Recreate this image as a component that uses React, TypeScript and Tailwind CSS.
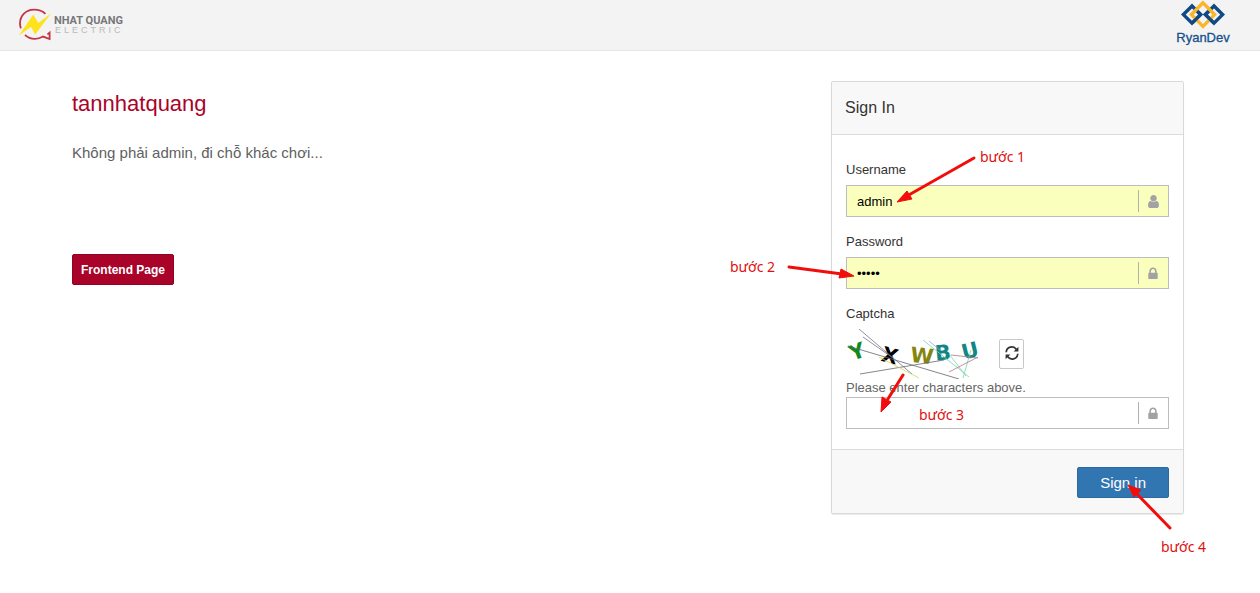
import React, { useState } from "react";

function BrandLogo() {
  return (
    <svg width="108" height="34" viewBox="0 0 108 34" role="img" aria-label="Nhat Quang Electric">
      <path
        d="M27.4 5.9C24.4 2.6 20.6 1.6 16.2 1.6C7.8 1.6 2 7.6 2 15.4C2 17.2 2.3 18.8 2.9 20.3M7 26.9C9.8 29.8 13 30.9 17 30.9C20 30.9 22.4 30.2 25 28.6L31.6 31V24.6L29.4 26.4"
        fill="none"
        stroke="#c63345"
        strokeWidth="1.8"
      />
      <path d="M33 5.6L17.2 26.6L13 19L0.8 27.4L15.3 6.6L20.2 15Z" fill="#ffe31a" />
      <text x="36" y="16" fontFamily="Roboto, 'Liberation Sans', sans-serif" fontWeight="700" fontSize="11" fill="#77777a">
        NHAT QUANG
      </text>
      <text x="37" y="25" fontFamily="'Liberation Sans', sans-serif" fontSize="9" letterSpacing="3" fill="#b9b9bc">
        ELECTRIC
      </text>
    </svg>
  );
}

function PartnerLogo() {
  return (
    <svg width="56" height="46" viewBox="0 0 56 46" role="img" aria-label="RyanDev">
      <g fill="none" strokeWidth="3.4">
        <path d="M17 6L8.400 14.600L17 23.200L25.600 14.600Z" stroke="#0f4a86" />
        <path d="M39 6L30.400 14.600L39 23.200L47.600 14.600Z" stroke="#0f4a86" />
        <path d="M28 2.800L16.400 14.600L28 26.400L39.600 14.600Z" stroke="#f9b52b" />
        <path d="M17.600 22.600L25.600 14.600L22.800 11.800M38.400 22.600L30.400 14.600L33.200 11.800" stroke="#0f4a86" />
      </g>
      <text x="28" y="42" textAnchor="middle" fontFamily="'Liberation Sans', sans-serif" fontSize="13" fill="#17508c" stroke="#17508c" strokeWidth="0.3">
        RyanDev
      </text>
    </svg>
  );
}

function CaptchaImage() {
  return (
    <svg width="140" height="50" viewBox="846 329 140 50" role="img" aria-label="Captcha">
      <g fontFamily="'DejaVu Sans', sans-serif" fontWeight="700" fontSize="21" textAnchor="middle">
        <text x="857" y="359" fill="#108a1c" transform="rotate(-20 857 351)">Y</text>
        <text x="890" y="363" fill="#000000" transform="rotate(14 890 355)">X</text>
        <text x="922" y="363" fill="#858510" transform="rotate(6 922 355)">W</text>
        <text x="943" y="360" fill="#128585" transform="rotate(-6 943 352)">B</text>
        <text x="970" y="358" fill="#128585" transform="rotate(-14 970 351)">U</text>
      </g>
      <g fill="none" strokeWidth="0.8">
        <path d="M859 329L912 374M863 337L893 358" stroke="#77728c" />
        <path d="M848 346L959 379M860 374L944 360" stroke="#66666e" />
        <path d="M879 357L919 378" stroke="#d3cf62" />
        <path d="M923 340L969 377M963 378L971 350M949 354L966 376" stroke="#7ad3aa" />
        <path d="M929 341L940 350" stroke="#8fa5dc" />
        <path d="M951 355L978 358M949 372L978 357" stroke="#b07a82" />
      </g>
    </svg>
  );
}

function RefreshIcon() {
  return (
    <svg width="14" height="14" viewBox="0 0 14 14" aria-hidden="true">
      <g fill="none" stroke="#333333" strokeWidth="1.7">
        <path d="M1.200 6.200A5.600 5.600 0 0 1 11.400 3.400" />
        <path d="M12.800 7.800A5.600 5.600 0 0 1 2.600 10.600" />
      </g>
      <path d="M13.400 0.800V5.600H8.600ZM0.600 13.200V8.400H5.400Z" fill="#333333" />
    </svg>
  );
}

function UserIcon() {
  return (
    <svg width="11" height="13" viewBox="0 0 1280 1536" fill="currentColor" aria-hidden="true">
      <path d="M1280 1271q0 109-62.500 187t-150.500 78H213q-88 0-150.500-78T0 1271q0-85 8.500-160.500t31.500-152 58.500-131 94-89T327 704q131 128 313 128t313-128q76 0 134.500 34.500t94 89 58.500 131 31.500 152 8.500 160.500zM1024 384q0 159-112.500 271.500T640 768 368.500 655.500 256 384t112.500-271.500T640 0t271.500 112.500T1024 384z" />
    </svg>
  );
}

function LockIcon() {
  return (
    <svg width="10" height="12" viewBox="0 64 1152 1472" fill="currentColor" aria-hidden="true">
      <path d="M320 768h512V576q0-106-75-181t-181-75-181 75-75 181v192zm832 96v576q0 40-28 68t-68 28H96q-40 0-68-28t-28-68V864q0-40 28-68t68-28h32V576q0-184 132-316t316-132 316 132 132 316v192h32q40 0 68 28t28 68z" />
    </svg>
  );
}

const arrows = [
  { line: "M974 158L907 196", head: "897,202 907,191 912,199" },
  { line: "M789 267L842 274", head: "854,276 839,278 841,269" },
  { line: "M903 375L886 402", head: "881,412 882,397 891,402" },
  { line: "M1170 528L1136 493", head: "1128,485 1141,490 1134,497" },
];

function Arrows() {
  return (
    <svg
      className="pointer-events-none absolute left-0 top-0 overflow-visible"
      width="353"
      height="433"
      viewBox="831 81 353 433"
      aria-hidden="true"
    >
      {arrows.map((a) => (
        <g key={a.line} stroke="#f20d0d" fill="#f20d0d">
          <path d={a.line} strokeWidth="3" strokeLinecap="round" />
          <polygon points={a.head} strokeWidth="1" />
        </g>
      ))}
    </svg>
  );
}

function Step({ n, className }: { n: number; className: string }) {
  return (
    <span
      className={`pointer-events-none absolute whitespace-nowrap font-['Noto_Sans',sans-serif] text-sm leading-5 text-[#e01010] ${className}`}
    >
      bước {n}
    </span>
  );
}

type FieldProps = {
  id: string;
  type: string;
  value: string;
  onChange: (v: string) => void;
  icon: React.ReactNode;
  filled?: boolean;
};

function Field({ id, type, value, onChange, icon, filled }: FieldProps) {
  return (
    <div
      className={`flex h-8 items-center border border-[#bdbdbd] ${filled ? "bg-[#faffbd]" : "bg-white"}`}
    >
      <input
        id={id}
        type={type}
        value={value}
        onChange={(e) => onChange(e.target.value)}
        className="h-full min-w-0 flex-1 bg-transparent px-2.5 text-[13px] text-black outline-none"
      />
      <span className="flex h-[22px] w-[30px] items-center justify-center border-l border-[#b0b0b0] pr-px text-[#a2a2a2]">
        {icon}
      </span>
    </div>
  );
}

export default function App() {
  const [username, setUsername] = useState("admin");
  const [password, setPassword] = useState("admin");
  const [captcha, setCaptcha] = useState("");

  return (
    <div className="min-h-screen bg-white font-['Liberation_Sans',Arial,sans-serif] text-[13px] text-[#333333]">
      <header className="flex h-[51px] items-start justify-between border-b border-[#e5e5e5] bg-[#f3f3f3] pl-[18px] pr-[29px]">
        <div className="pt-2">
          <BrandLogo />
        </div>
        <PartnerLogo />
      </header>

      <main className="grid grid-cols-[2fr_1fr] gap-[53px] pl-[72px] pr-[76px] pt-[30px]">
        <section className="flex flex-col items-start pt-2">
          <h1 className="text-[22px] leading-[30px] text-[#a90329]">tannhatquang</h1>
          <p className="mt-6 text-[15px] leading-5 text-[#5f5f5f]">Không phải admin, đi chỗ khác chơi...</p>
          <a
            href="#"
            className="mt-[91px] flex h-[31px] items-center rounded-xs border border-[#900323] bg-[#a90329] px-2 text-xs font-bold text-white"
          >
            Frontend Page
          </a>
        </section>

        <div className="relative">
          <form
            onSubmit={(e) => e.preventDefault()}
            className="rounded-xs border border-[#d9d9d9] bg-white shadow-[0_1px_1px_#ececec]"
          >
            <h2 className="border-b border-[#dcdcdc] bg-[#f8f8f8] px-[13px] py-3.5 text-base leading-6 text-[#333333]">
              Sign In
            </h2>
            <div className="px-3.5 pb-5 pt-[25px]">
              <label htmlFor="username" className="mb-1.5 block leading-[19px]">
                Username
              </label>
              <Field id="username" type="text" value={username} onChange={setUsername} icon={<UserIcon />} filled />
              <label htmlFor="password" className="mb-1.5 mt-[15px] block leading-[19px]">
                Password
              </label>
              <Field id="password" type="password" value={password} onChange={setPassword} icon={<LockIcon />} filled />
              <label htmlFor="captcha" className="mb-1.5 mt-[15px] block leading-[19px]">
                Captcha
              </label>
              <div className="flex h-[50px] items-center gap-[13px]">
                <CaptchaImage />
                <button
                  type="button"
                  aria-label="Refresh captcha"
                  className="flex h-[30px] w-[25px] items-center justify-center rounded-xs border border-[#c8c8c8] bg-white pb-0.5"
                >
                  <RefreshIcon />
                </button>
              </div>
              <p className="leading-[18px] text-[#666666]">Please enter characters above.</p>
              <Field id="captcha" type="text" value={captcha} onChange={setCaptcha} icon={<LockIcon />} />
            </div>
            <div className="flex justify-end border-t border-[#dcdcdc] bg-[#f8f8f8] px-3.5 pb-[15px] pt-[17px]">
              <button
                type="submit"
                className="h-[31px] rounded-xs border border-[#2c699d] bg-[#3276b1] px-[22px] pt-0.5 text-[15px] text-white"
              >
                Sign in
              </button>
            </div>
          </form>
          <Arrows />
          <Step n={1} className="left-[149px] top-[66px]" />
          <Step n={2} className="left-[-101px] top-[176px]" />
          <Step n={3} className="left-[88px] top-[324px]" />
          <Step n={4} className="left-[330px] top-[456px]" />
        </div>
      </main>
    </div>
  );
}
